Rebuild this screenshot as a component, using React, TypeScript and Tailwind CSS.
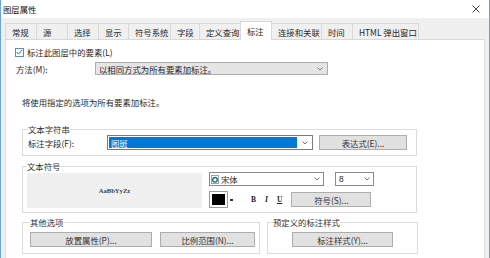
import type { ReactNode } from 'react';

const tabs = [
  { label: '常规', w: 'w-[32px]' },
  { label: '源', w: 'w-[32px]' },
  { label: '选择', w: 'w-[32px]' },
  { label: '显示', w: 'w-[31px]' },
  { label: '符号系统', w: 'w-[43px]' },
  { label: '字段', w: 'w-[30px]' },
  { label: '定义查询', w: 'w-[42px]' },
  { label: '标注', w: 'w-[32px]', active: true },
  { label: '连接和关联', w: 'w-[51px]' },
  { label: '时间', w: 'w-[32px]' },
  { label: 'HTML 弹出窗口', w: 'w-[67px]' },
];

function Chevron() {
  return (
    <svg width="6" height="4" viewBox="0 0 6 4" className="shrink-0">
      <path d="M0.5 0.5 L3 3 L5.5 0.5" fill="none" stroke="#6b6b6b" strokeWidth="0.9" />
    </svg>
  );
}

function Button({ children, className }: { children: ReactNode; className: string }) {
  return (
    <div
      className={`flex items-center justify-center bg-[#e1e1e1] border border-[#adadad] text-[#333] ${className}`}
    >
      {children}
    </div>
  );
}

function Group({
  title,
  className,
  children,
}: {
  title: string;
  className: string;
  children: ReactNode;
}) {
  return (
    <fieldset className={`border border-[#dcdcdc] ${className}`}>
      <legend className="leading-[12px] px-0 text-[#333]">{title}</legend>
      {children}
    </fieldset>
  );
}

export default function App() {
  return (
    <div className="w-[490px] h-[258px] overflow-hidden bg-[#f0f0f0] border-x border-[#6aa3d8] flex flex-col font-['Noto_Sans_CJK_SC',sans-serif] text-[8.4px] leading-[12px] text-[#2a2a2a]">
      {/* title bar */}
      <div className="h-[18px] shrink-0 bg-white flex items-center justify-between pl-[2px] pr-[9px]">
        <span className="text-[#111]">图层属性</span>
        <svg width="8" height="8" viewBox="0 0 8 8">
          <path d="M0.5 0.5 L7.5 7.5 M7.5 0.5 L0.5 7.5" stroke="#333" strokeWidth="0.9" />
        </svg>
      </div>

      {/* tabs */}
      <div className="h-[21px] shrink-0 flex items-end pl-[4px]">
        {tabs.map((t, i) =>
          t.active ? (
            <div
              key={t.label}
              className={`${t.w} h-[19px] -ml-px mb-[-1px] relative z-10 bg-white border border-b-0 border-[#d9d9d9] pl-[6px] flex items-center`}
            >
              {t.label}
            </div>
          ) : (
            <div
              key={t.label}
              className={`${t.w} h-[16px] ${i === 0 ? '' : '-ml-px'} border border-b-0 border-[#d9d9d9] pl-[6px] flex items-center`}
            >
              {t.label}
            </div>
          )
        )}
      </div>

      {/* panel */}
      <div className="flex-1 mx-[4px] bg-white border-t border-x border-[#d9d9d9] flex flex-col">
        <div className="mt-[6px] h-[12px] pl-[9px] flex items-center gap-[3px]">
          <div className="w-[9px] h-[9px] border border-[#5a8fc9] bg-white flex items-center justify-center">
            <svg width="7" height="6" viewBox="0 0 7 6">
              <path d="M0.6 3 L2.6 5 L6.4 0.8" fill="none" stroke="#2a62b5" strokeWidth="1" />
            </svg>
          </div>
          <span>标注此图层中的要素(L)</span>
        </div>

        <div className="mt-[4px] h-[13px] pl-[10px] flex items-center">
          <span className="w-[79px]">方法(M):</span>
          <div className="w-[233px] h-[13px] bg-[#e5e5e5] border border-[#adadad] flex items-center justify-between pl-[3px] pr-[4px]">
            <span>以相同方式为所有要素加标注。</span>
            <Chevron />
          </div>
        </div>

        <div className="mt-[21px] h-[12px] pl-[16px]">将使用指定的选项为所有要素加标注。</div>

        <Group title="文本字符串" className="mt-[15px] ml-[16px] w-[395px] px-[5px] pb-[5px]">
          <div className="h-[15px] flex items-center">
            <span className="w-[79px]">标注字段(F):</span>
            <div className="w-[206px] h-[15px] border border-[#7a7a7a] bg-white flex items-center p-[1px] pr-[4px] gap-[5px]">
              <div className="flex-1 h-full bg-[#0078d7] text-white flex items-center pl-[2px]">图斑</div>
              <Chevron />
            </div>
            <Button className="ml-[6px] w-[88px] h-[15px]">表达式(E)...</Button>
          </div>
        </Group>

        <Group title="文本符号" className="mt-[4px] ml-[16px] w-[395px] px-[4px] pb-[4px]">
          <div className="flex">
            <div className="mt-[1px] w-[175px] h-[35px] bg-[#f0f0f0] flex items-center justify-center">
              <span className="font-['Liberation_Serif',serif] text-[6.6px] font-bold text-[#444]">AaBbYyZz</span>
            </div>
            <div className="ml-[7px] flex flex-col">
              <div className="flex items-center">
                <div className="w-[115px] h-[14px] border border-[#8a8a8a] bg-white flex items-center justify-between pl-[1px] pr-[3px]">
                  <div className="flex items-center gap-[2px]">
                    <svg width="8" height="9" viewBox="0 0 8 9">
                      <rect x="0.5" y="0.5" width="7" height="8" fill="#fff" stroke="#8c8c8c" strokeWidth="0.8" />
                      <circle cx="4" cy="4.8" r="2.3" fill="none" stroke="#1f8f6a" strokeWidth="1.4" />
                      <circle cx="4" cy="4.8" r="2.3" fill="none" stroke="#1c5fb0" strokeWidth="0.5" />
                    </svg>
                    <span>宋体</span>
                  </div>
                  <Chevron />
                </div>
                <div className="ml-[11px] w-[39px] h-[14px] border border-[#8a8a8a] bg-white flex items-center justify-between pl-[3px] pr-[3px]">
                  <span className="font-['Liberation_Sans',sans-serif]">8</span>
                  <Chevron />
                </div>
              </div>
              <div className="mt-[5px] h-[17px] flex items-center">
                <div className="w-[19px] h-[17px] border border-[#9a9a9a] bg-white p-[2px]">
                  <div className="w-full h-full bg-black" />
                </div>
                <span className="ml-[2px] w-[3px] h-[2px] bg-[#333]" />
                <div className="ml-[18px] flex items-center gap-[9px] font-['Liberation_Serif',serif] font-bold text-[7.5px] text-[#222]">
                  <span>B</span>
                  <span className="italic">I</span>
                  <span className="underline">U</span>
                </div>
                <Button className="ml-[9px] w-[80px] h-[15px]">符号(S)...</Button>
              </div>
            </div>
          </div>
        </Group>

        <div className="mt-[3px] ml-[16px] flex gap-[7px]">
          <Group title="其他选项" className="w-[238px] pl-[7px] pb-[6px]">
            <div className="mt-[4px] flex gap-[8px]">
              <Button className="w-[122px] h-[15px]">放置属性(P)...</Button>
              <Button className="w-[95px] h-[15px]">比例范围(N)...</Button>
            </div>
          </Group>
          <Group title="预定义的标注样式" className="w-[151px] pl-[5px] pb-[6px]">
            <div className="mt-[4px] flex pl-[19px]">
              <Button className="w-[101px] h-[15px]">标注样式(Y)...</Button>
            </div>
          </Group>
        </div>
      </div>
    </div>
  );
}
